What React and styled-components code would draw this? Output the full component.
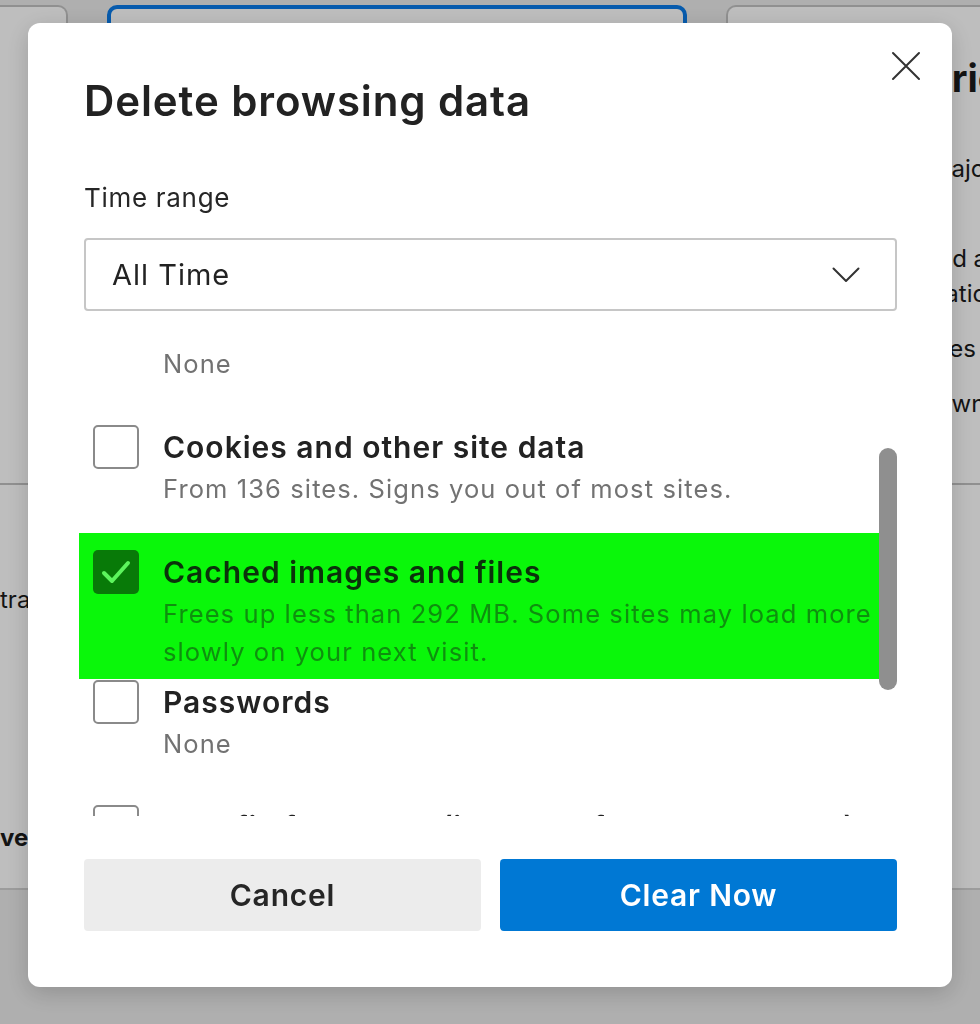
import React, { useLayoutEffect, useRef } from "react";
import styled, { createGlobalStyle } from "styled-components";

const GlobalStyle = createGlobalStyle`
  html, body { margin: 0; padding: 0; }
  body {
    font-family: Inter, "Noto Sans", "Liberation Sans", sans-serif;
    background: #ebebeb;
    overflow: hidden;
  }
  * { box-sizing: border-box; }
`;

/* ---------- background settings page (dimmed by backdrop) ---------- */
const Page = styled.div`
  width: 980px;
  height: 1024px;
  overflow: hidden;
  background: #ebebeb;
  display: flex;
  flex-direction: column;
  color: #1b1b1b;
`;

const CardRow = styled.div`
  display: grid;
  grid-template-columns: 68px 580px 1fr;
  column-gap: 39px;
  padding-top: 5px;
  height: 485px;
  flex: none;
`;

const BgCard = styled.div`
  background: #fff;
  border: ${(p) => (p.$selected ? "4px solid #0a7be8" : "2px solid #c2c2c2")};
  border-radius: 10px;
  ${(p) => p.$cut === "left" && "border-left: none; border-top-left-radius: 0; border-bottom-left-radius: 0;"}
  ${(p) => p.$cut === "right" && "border-right: none; border-top-right-radius: 0; border-bottom-right-radius: 0;"}
  overflow: hidden;
  white-space: nowrap;
`;

const BgHeading = styled.div`
  margin: 48px 0 0 185px;
  font-size: 38px;
  line-height: 46px;
  font-weight: 700;
`;

const BgList = styled.ul`
  list-style: none;
  margin: 50px 0 0 100px;
  padding: 0;
  display: flex;
  flex-direction: column;
  gap: 20px;
  font-size: 24px;
  line-height: 35px;
`;

const LowerSection = styled.div`
  height: 405px;
  flex: none;
  background: #fff;
  border-bottom: 2px solid #d2d2d2;
  white-space: nowrap;
  display: flex;
  flex-direction: column;
`;

const BgText = styled.div`
  margin-top: ${(p) => p.$top}px;
  font-size: 24px;
  line-height: 34px;
  font-weight: ${(p) => (p.$bold ? 700 : 400)};
`;

/* ---------- dialog ---------- */
const Backdrop = styled.div`
  position: fixed;
  inset: 0;
  background: rgba(0, 0, 0, 0.255);
  padding: 23px 0 0 28px;
  display: flex;
  align-items: flex-start;
`;

const Dialog = styled.div`
  position: relative;
  width: 924px;
  height: 964px;
  background: #fff;
  border-radius: 12px;
  box-shadow: 0 6px 24px rgba(0, 0, 0, 0.18);
  padding: 0 55px 56px 56px;
  display: flex;
  flex-direction: column;
  color: #1b1b1b;

  & > * { flex-shrink: 0; }
`;

const CloseButton = styled.button`
  position: absolute;
  top: 28px;
  right: 31px;
  width: 30px;
  height: 30px;
  padding: 0;
  border: none;
  background: transparent;
  display: flex;
  align-items: center;
  justify-content: center;
  cursor: pointer;
`;

const Title = styled.h1`
  margin: 54px 0 0;
  font-size: 42px;
  line-height: 48px;
  font-weight: 600;
  letter-spacing: 0.9px;
  color: #222;
`;

const Label = styled.div`
  margin-top: 57px;
  font-size: 26px;
  line-height: 32px;
  letter-spacing: 0.7px;
  color: #262626;
`;

const Select = styled.div`
  margin-top: 24px;
  height: 73px;
  border: 2px solid #c6c6c6;
  border-radius: 4px;
  display: flex;
  align-items: center;
  justify-content: space-between;
  padding: 0 35px 0 26px;
  font-size: 29px;
  letter-spacing: 1px;
  color: #222;
`;

const ListArea = styled.div`
  margin: 34px 0 0 -5px;
  height: 471px;
  display: flex;
`;

const ListScroll = styled.div`
  flex: 1;
  overflow: hidden;
`;

const Track = styled.div`
  width: 18px;
  flex: none;
`;

const Thumb = styled.div`
  margin-top: 103px;
  height: 242px;
  border-radius: 9px;
  background: #8f8f8f;
`;

const Item = styled.div`
  display: flex;
  align-items: flex-start;
  gap: 24px;
  margin-top: ${(p) => p.$gap}px;
  padding: ${(p) => (p.$hl ? "18px 0 8px 14px" : "0 0 0 14px")};
  background: ${(p) => (p.$hl ? "#0af70a" : "transparent")};
`;

const Box = styled.div`
  flex: none;
  width: 46px;
  height: 44px;
  margin-top: -1px;
  border-radius: 5px;
  border: ${(p) => (p.$checked ? "none" : "2px solid #8a8a8a")};
  background: ${(p) => (p.$checked ? "#087a08" : "#fff")};
  display: flex;
  align-items: center;
  justify-content: center;
`;

const ItemText = styled.div`
  display: flex;
  flex-direction: column;
  gap: 2px;
  min-width: 0;
`;

const ItemTitle = styled.div`
  font-size: 30px;
  line-height: 42px;
  font-weight: 600;
  letter-spacing: 1px;
  white-space: nowrap;
  color: ${(p) => (p.$hl ? "#0b320b" : "#222")};
`;

const ItemSub = styled.div`
  font-size: 25.5px;
  line-height: 38px;
  letter-spacing: 1.1px;
  color: ${(p) => (p.$hl ? "#0f8f0f" : "#727272")};
`;

const Buttons = styled.div`
  margin-top: 43px;
  display: grid;
  grid-template-columns: 1fr 1fr;
  column-gap: 19px;
`;

const Button = styled.button`
  height: 72px;
  border: none;
  border-radius: 4px;
  font-family: inherit;
  font-size: 30px;
  font-weight: 600;
  letter-spacing: 0.8px;
  background: ${(p) => (p.$primary ? "#0078d4" : "#ececec")};
  color: ${(p) => (p.$primary ? "#fff" : "#262626")};
  cursor: pointer;
`;

const items = [
  { title: "Browsing history", sub: ["None"] },
  { title: "Download history", sub: ["None"] },
  { title: "Cookies and other site data", sub: ["From 136 sites. Signs you out of most sites."] },
  {
    title: "Cached images and files",
    sub: ["Frees up less than 292 MB. Some sites may load more", "slowly on your next visit."],
    checked: true,
    hl: true,
  },
  { title: "Passwords", sub: ["None"] },
  { title: "Autofill form data (includes forms and cards)", sub: ["None"] },
  { title: "Site permissions", sub: ["None"] },
];

function Check() {
  return (
    <svg width="46" height="44" viewBox="0 0 46 44">
      <path d="M11 23 L19 31 L35 13" fill="none" stroke="#5df55d" strokeWidth="4" strokeLinecap="round" strokeLinejoin="round" />
    </svg>
  );
}

export default function App() {
  const scrollRef = useRef(null);
  useLayoutEffect(() => {
    if (scrollRef.current) scrollRef.current.scrollTop = 169;
  }, []);

  let prevHl = false;
  return (
    <>
      <GlobalStyle />
      <Page>
        <CardRow>
          <BgCard $cut="left" />
          <BgCard $selected />
          <BgCard $cut="right">
            <BgHeading>Strict</BgHeading>
            <BgList>
              <li>Blocks a majority of trackers from<br />all sites</li>
              <li>Content and ads will likely have minimal<br />personalization</li>
              <li>Parts of sites might not work</li>
              <li>Blocks known harmful trackers</li>
            </BgList>
          </BgCard>
        </CardRow>
        <LowerSection>
          <BgText $top={98}>trackers blocked on this site</BgText>
          <BgText $top={204} $bold>verify exceptions</BgText>
        </LowerSection>
      </Page>

      <Backdrop>
        <Dialog role="dialog" aria-label="Delete browsing data">
          <CloseButton aria-label="Close">
            <svg width="30" height="30" viewBox="0 0 30 30">
              <path d="M2 2 L28 28 M28 2 L2 28" stroke="#333" strokeWidth="2" strokeLinecap="round" />
            </svg>
          </CloseButton>
          <Title>Delete browsing data</Title>
          <Label>Time range</Label>
          <Select>
            <span>All Time</span>
            <svg width="28" height="16" viewBox="0 0 28 16">
              <path d="M1.5 1.5 L14 14 L26.5 1.5" fill="none" stroke="#333" strokeWidth="2" strokeLinecap="round" strokeLinejoin="round" />
            </svg>
          </Select>
          <ListArea>
            <ListScroll ref={scrollRef}>
              {items.map((it, i) => {
                const gap = i === 0 ? 0 : it.hl ? 25 : prevHl ? 2 : 43;
                prevHl = !!it.hl;
                return (
                  <Item key={it.title} $gap={gap} $hl={it.hl}>
                    <Box $checked={it.checked}>{it.checked && <Check />}</Box>
                    <ItemText>
                      <ItemTitle $hl={it.hl}>{it.title}</ItemTitle>
                      <ItemSub $hl={it.hl}>
                        {it.sub.map((s, j) => (
                          <React.Fragment key={j}>
                            {j > 0 && <br />}
                            {s}
                          </React.Fragment>
                        ))}
                      </ItemSub>
                    </ItemText>
                  </Item>
                );
              })}
            </ListScroll>
            <Track>
              <Thumb />
            </Track>
          </ListArea>
          <Buttons>
            <Button>Cancel</Button>
            <Button $primary>Clear Now</Button>
          </Buttons>
        </Dialog>
      </Backdrop>
    </>
  );
}
